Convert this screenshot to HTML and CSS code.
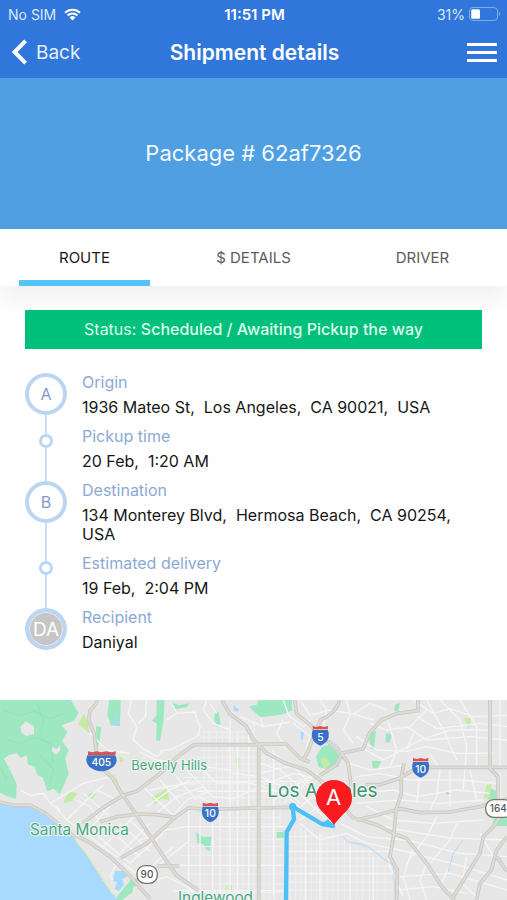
FILE: index.html
```html
<!DOCTYPE html>
<html lang="en">
  <head>
    <meta charset="UTF-8" />
    <meta name="viewport" content="width=device-width, initial-scale=1" />
    <title>Shipment details</title>
    <link rel="stylesheet" href="styles.css">
  </head>
  <body>
    <header class="header">
      <div class="statusbar">
        <span class="carrier">No SIM
          <svg class="wifi" viewBox="0 0 17 13" width="17" height="13" aria-hidden="true">
            <path d="M1 4.7a10.7 10.7 0 0 1 15 0M3.6 7.5a7 7 0 0 1 9.8 0" />
            <path class="wifi-dot" d="M5.6 9.5a4.2 4.2 0 0 1 5.8 0L8.5 12.6z" />
          </svg>
        </span>
        <span class="time">11:51 PM</span>
        <span class="battery">31%
          <svg viewBox="0 0 32 14" width="32" height="14" aria-hidden="true">
            <rect class="battery-case" x="0.5" y="0.5" width="28" height="13" rx="3.5" />
            <rect x="2.2" y="2.2" width="8.8" height="9.6" rx="1.5" fill="#fff" />
            <path d="M30 4.5q2 2.5 0 5z" fill="#8fb5ea" />
          </svg>
        </span>
      </div>
      <nav class="navbar">
        <a class="back" href="#">
          <svg viewBox="0 0 16 26" width="16" height="26" aria-hidden="true"><path d="M13.6 1.8 2.6 13l11 11.2" /></svg>
          Back
        </a>
        <h1 class="title">Shipment details</h1>
        <button class="menu" type="button" aria-label="Menu">
          <span></span><span></span><span></span>
        </button>
      </nav>
    </header>

    <section class="package">Package # 62af7326</section>

    <div class="tabs" role="tablist">
      <button class="tab active" type="button" role="tab" aria-selected="true">ROUTE</button>
      <button class="tab" type="button" role="tab" aria-selected="false">$ DETAILS</button>
      <button class="tab" type="button" role="tab" aria-selected="false">DRIVER</button>
    </div>

    <main class="route">
      <p class="status">Status: <strong>Scheduled / Awaiting Pickup the way</strong></p>

      <ol class="timeline">
        <li class="stop">
          <div class="track"><span class="marker">A</span></div>
          <div class="info">
            <h2>Origin</h2>
            <p>1936 Mateo St,  Los Angeles,  CA 90021,  USA</p>
          </div>
        </li>
        <li class="stop">
          <div class="track"><span class="dot"></span></div>
          <div class="info">
            <h2>Pickup time</h2>
            <p>20 Feb,  1:20 AM</p>
          </div>
        </li>
        <li class="stop">
          <div class="track"><span class="marker">B</span></div>
          <div class="info">
            <h2>Destination</h2>
            <p>134 Monterey Blvd,  Hermosa Beach,  CA 90254,  USA</p>
          </div>
        </li>
        <li class="stop">
          <div class="track"><span class="dot"></span></div>
          <div class="info">
            <h2>Estimated delivery</h2>
            <p>19 Feb,  2:04 PM</p>
          </div>
        </li>
        <li class="stop">
          <div class="track"><span class="marker avatar">DA</span></div>
          <div class="info">
            <h2>Recipient</h2>
            <p>Daniyal</p>
          </div>
        </li>
      </ol>
    </main>

    <svg class="map" viewBox="0 30 1521 600" role="img" aria-label="Route map">
      <defs>
        <g id="roads">
          <path d="M294 30Q284 50 270 62L266 90L282 130L288 180L304 234L336 262L366 312L404 366L446 432L492 502L530 556L596 602M248 400L310 352L370 316L410 304L474 256L530 202L582 164H776V630M776 162H858L900 204L930 216M300 396L350 380L420 372L470 374L526 382L566 354L630 358L760 354L872 352M362 504L440 460L524 384M228 436L270 458L330 500L384 552L450 626M470 528H538M0 336L40 346L92 346L134 368L180 406L228 444" />
          <path d="M666 30L690 72L738 108L760 148L800 190L862 222L920 240L960 270L1020 340L1060 384L1130 404L1180 430L1220 446L1280 520L1330 596L1364 630M884 30L890 72L930 104L960 136L1026 190L1090 176L1108 130L1144 90L1192 70L1254 62V30M1018 30Q1014 64 962 90L940 140L926 180L908 214M1026 190L1010 224L960 256M1026 190L1044 220L1054 290M1212 220L1204 260L1204 310L1188 360L1182 430L1170 500L1192 540L1190 630M1096 284L1140 284L1200 264L1240 240L1290 232H1521M1470 30V236L1494 260L1494 330M1070 390L1130 376L1200 356L1260 368L1350 366L1440 350L1521 326M1521 350L1480 410L1450 440L1440 490L1360 620M1521 440L1490 480L1474 540L1440 580L1430 630M1490 500L1521 544" />
        </g>
      </defs>
      <rect y="30" width="1521" height="600" fill="#e7e7e8" />

      <!-- parks -->
      <g fill="#9de8c0">
        <path d="M0 30H212L236 68L222 92L184 106L202 126L186 152L206 180L196 206L206 252L192 284L180 312L160 296L142 304L128 262L112 256L104 230L84 224L80 196L62 204L50 190L28 194L12 206L30 240L50 282L48 326L20 318L0 308Z" />
        <path d="M328 30H362L360 108L332 106L322 72ZM288 108L304 112L298 160L290 178ZM470 30H494L490 96L480 152L468 150L470 100L456 92L470 76ZM516 36L536 46L570 38L560 52L522 58ZM646 66L656 66L662 104L652 112L642 86Z" />
        <path d="M776 30H876V62L842 74L782 82L746 50L770 44ZM1095 136L1128 122L1122 178L1112 176L1108 148ZM1158 130L1176 132L1170 156L1156 158ZM1116 212L1144 214L1130 240L1118 232ZM1186 44L1200 38L1194 66L1182 60Z" />
        <path d="M966 170L986 164L1026 200L1014 230L984 238L956 232L948 200ZM588 426L606 440L634 440L630 484L618 478L612 464L592 460ZM830 422H852V444H830ZM352 618L394 568L412 564L416 584L400 592L398 606L366 630L348 630ZM1482 382H1521V408H1476ZM1464 290L1494 306L1492 330L1462 328ZM0 600L6 604V630H0Z" />
      </g>
      <g fill="#c5eba6">
        <path d="M252 70L234 102L268 130L264 100ZM192 328L210 304L232 310L216 334L192 340ZM256 322L272 308L290 310L274 328ZM456 322L500 296L508 330L484 326L464 344ZM708 202L718 202L718 234L708 228ZM680 584L698 584L698 606L676 606ZM1392 84H1414L1406 118L1400 102ZM1460 284L1474 282L1470 322L1450 326ZM356 196L374 210L360 218ZM344 250L356 280L348 278ZM960 208L976 200L990 222L972 238Z" />
      </g>
      <g fill="#e7e7e8">
        <path d="M62 110L76 94L102 108L102 132L80 138L64 128ZM158 170L170 178L180 164L180 182L168 194L154 184Z" />
      </g>
      <g class="ridges">
        <path d="M8 60L60 76L104 64L150 86L190 70M20 150L60 160L110 142L150 160L160 220M112 40L130 90L120 140M120 196L160 236L150 280M0 230L20 270" />
      </g>

      <!-- city streets -->
      <g class="streets fine">
        <path d="M612 126V330M628 120V334M650 124V350M668 130V350M684 110V630M698 130V630M714 120V630M730 120V630M748 100V630M762 90V630M792 190V630M808 206V630M824 216V630M840 220V400M610 126H760M600 142H770M600 182H790M590 202H820M590 222H840M560 242H800M550 262H780M540 282H860M530 302H860M520 322H870M610 382H840M660 402H840M660 424H850M650 448H850M540 470H850M540 496H850M530 526H850M560 552H850M560 582H850M560 608H850" />
        <path d="M872 434V630M886 420V630M902 410V630M918 430V630M934 430V630M950 430V630M966 430V630M982 430V630M998 430V630M1014 430V630M1034 450V630M1052 466V630M1070 470V630M1088 480V630M1108 490V630M1132 510V630M1156 530V630M866 440H1010M866 462H1030M866 484H1100M866 506H1140M866 528H1170M866 552H1180M866 576H1180M866 600H1180" />
      </g>
      <g class="streets">
        <path d="M566 358V630M600 380V600M638 400V630M660 350V630M690 90V630M712 130V630M746 130V630M820 180V620M916 420V630M960 430V630M1050 460V630M1120 500V630M540 526H850M420 450L500 420L560 410H860M590 304H880M450 300L590 274H900M864 484H1180M864 550H1180M520 602H860" />
        <path d="M396 30L384 70L410 110L400 150L430 176L470 200L500 176M440 30L436 80L416 100M500 90L530 70L584 66L600 110L596 136L520 176L480 184M420 186L470 210L580 226L690 240M516 40L530 70M620 30L610 60L640 100L690 120M270 130L320 180L390 190M60 300L90 316L130 310L150 340L180 360M150 340L250 280L330 260M166 350L200 390L250 340L310 284M200 390L256 430L330 348M230 330L270 350L296 390M250 310L330 380M290 300L350 330M256 430L310 470L400 380M310 470L350 500L450 400M296 440L390 520L490 430M330 420L420 500M360 400L450 484M390 390L470 470M370 520L420 560L520 470M420 560L470 530L570 450M350 520L330 560L360 590M440 580L500 560L580 600" />
        <path d="M440 350L510 300L570 270M470 370L530 320L610 290M520 376L560 330L640 300M430 290L470 330L520 376M480 270L540 340M520 250L590 330M560 240L640 320L700 326L780 290M600 230L650 280L740 276L860 310M592 320L660 350M700 250L780 260L850 290L900 340M780 220L840 240L900 290M820 190L880 230L940 290M780 250L860 230L930 240M800 280L880 250L940 262M820 330L880 290L950 250M850 340L940 260M880 370L960 300M900 390L980 330M840 300L940 390M870 280L980 390M900 266L1000 370" />
        <path d="M900 400L960 450L1040 430L1100 460L1200 480L1370 524L1521 570M1020 400L1100 440L1230 452L1380 490L1521 500M1060 390L1200 420L1350 444L1521 450M1100 350L1180 390L1300 400L1450 390M1180 440L1166 520L1210 620M1240 470L1210 560L1230 630M1290 500L1260 570L1280 630M1350 524L1320 590M1400 500L1386 580L1440 630M1440 430L1480 500L1521 530M1370 400L1350 450L1290 520M1310 380L1280 440L1220 520M1200 560L1350 550L1521 600M1190 600L1300 590L1400 610" />
        <path d="M900 30L930 76L990 60L1060 72L1110 40M960 30L980 60L970 106M1040 30L1050 76L1030 120L1060 160M1060 72L1120 90M1110 40L1160 60M1070 140L1130 180L1220 184L1280 170L1370 190L1480 190M1080 170L1150 210L1260 150L1350 120L1470 120M1050 220L1110 240L1210 226M1070 260L1140 250L1230 270L1380 270L1490 280M1080 310L1180 300L1250 320L1370 300L1470 310M1070 340L1200 330L1320 340L1450 330" />
        <path d="M1240 30L1300 70L1350 56L1420 80L1521 76M1280 30L1330 120L1370 210M1320 30L1380 90L1400 170L1390 300M1380 30L1430 110L1430 230M1500 30V230M1250 80L1310 116L1440 100L1521 110M1220 110L1280 150L1410 140L1521 150M1290 190L1320 240L1310 320L1290 360M1350 230V350M1260 250L1250 340M1410 240L1430 330M1110 100L1160 120L1230 110L1280 60M1160 80L1190 180L1170 230M1240 130L1220 180M1500 250V330M850 90L830 130L860 180M880 100L930 140L920 170M850 30L866 76L910 110L930 90M630 40L650 70M720 80L790 110L870 96M780 82L790 110" />
      </g>

      <!-- water -->
      <g fill="#a8daff">
        <path d="M0 340L40 346L92 352L134 374L180 410L228 450L260 490L290 534L318 580L338 608L352 630H0Z" />
        <path d="M344 544L382 542L380 562L366 566L372 584L356 604L344 598L350 578L340 572ZM702 42L708 54L718 56L712 66L700 62ZM344 74L354 90L360 108L342 106ZM902 124L912 128L908 152L902 146ZM1336 304L1352 310L1340 314Z" />
      </g>
      <path d="M228 452L262 494L290 538L318 582L338 610L352 602" fill="none" stroke="#f3ebad" stroke-width="4" />
      <path d="M1030 440L1042 456L1080 462L1110 474L1154 508L1180 526L1186 630M1388 450L1360 490L1344 546M988 150L1014 168L1030 210" fill="none" stroke="#b1dcfa" stroke-width="3" />

      <!-- freeways, casing first -->
      <use href="#roads" class="roads-edge" />
      <use href="#roads" class="roads-fill" />

      <!-- route line -->
      <path d="M1004 408L966 402L878 350L882 388L860 426L858 630" fill="none" stroke="#4fc0f7" stroke-width="13" stroke-linejoin="round" />
      <path d="M960 404L984 388L1008 412Z" fill="#4fc0f7" />
      <circle cx="878" cy="350" r="11" fill="#4fc0f7" />

      <!-- highway shields -->
      <g class="shield">
        <path d="M262 196H346Q356 216 340 230Q324 242 304 244Q284 242 268 230Q254 216 262 196Z" fill="#3871c6" />
        <path d="M264 184L276 187L290 184L304 187L318 184L334 187L348 184L346 195H264Z" fill="#db5351" />
        <text x="304" y="228">405</text>
      </g>
      <g class="shield">
        <path id="shield" d="M608 350H654Q664 384 631 397Q598 384 608 350Z" fill="#3871c6" />
        <path id="crown" d="M608 338L619 341L631 338L643 341L654 338V348H608Z" fill="#db5351" />
        <text x="631" y="382">10</text>
      </g>
      <g class="shield">
        <use href="#shield" x="330" y="-230" />
        <use href="#crown" x="330" y="-230" />
        <text x="961" y="152">5</text>
      </g>
      <g class="shield">
        <use href="#shield" x="631" y="-134" />
        <use href="#crown" x="631" y="-134" />
        <text x="1262" y="248">10</text>
      </g>
      <g class="badge">
        <rect x="411" y="527" width="61" height="53" rx="24" />
        <text x="441" y="564">90</text>
        <rect x="1457" y="329" width="80" height="53" rx="24" />
        <text x="1495" y="366">164</text>
      </g>

      <g class="places">
        <text x="394" y="240" font-size="39">Beverly Hills</text>
        <text x="90" y="434" font-size="46">Santa Monica</text>
        <text x="534" y="638" font-size="46">Inglewood</text>
        <text x="802" y="321" font-size="57" class="city">Los Angeles</text>
      </g>

      <!-- pickup pin -->
      <path d="M1002 404Q988 386 962 360A54 54 0 1 1 1042 360Q1016 386 1002 404Z" fill="#fb1b1f" />
      <text class="pin-label" x="1001" y="344">A</text>
    </svg>
  </body>
</html>
```

FILE: styles.css
```css
* {
  box-sizing: border-box;
}
body {
  margin: 0;
  background: #fff;
  color: #171717;
  font-family: Inter, "Liberation Sans", sans-serif;
  font-size: 16px;
}
h1,
h2,
p,
ol {
  margin: 0;
  padding: 0;
}
button {
  border: 0;
  padding: 0;
  background: none;
  font: inherit;
  cursor: pointer;
}

/* header */
.header {
  background: #3177db;
  color: #fff;
}
.statusbar,
.navbar {
  display: grid;
  grid-template-columns: 1fr auto 1fr;
  align-items: center;
}
.statusbar {
  height: 28px;
  padding: 0 6px 0 8px;
  font-size: 14px;
}
.carrier,
.battery {
  display: flex;
  align-items: center;
  gap: 8px;
  color: #dce8fa;
}
.battery {
  justify-content: flex-end;
  gap: 4px;
}
.time {
  font-size: 15px;
  font-weight: 600;
}
.wifi {
  fill: none;
  stroke: #fff;
  stroke-width: 2;
}
.wifi .wifi-dot {
  fill: #fff;
  stroke: none;
}
.battery-case {
  fill: none;
  stroke: #80abe8;
}
.navbar {
  height: 50px;
  padding: 0 10px 2px 12px;
}
.back {
  display: flex;
  align-items: center;
  gap: 8px;
  color: #e6effc;
  font-size: 19px;
  text-decoration: none;
}
.back svg {
  fill: none;
  stroke: #fff;
  stroke-width: 4;
}
.title {
  font-size: 21px;
  font-weight: 600;
}
.menu {
  display: flex;
  flex-direction: column;
  gap: 5px;
  width: 30px;
  justify-self: end;
}
.menu span {
  height: 3px;
  background: #fff;
}

.package {
  padding: 61px 20px;
  background: #509fe3;
  color: #f4f9fe;
  font-size: 22px;
  line-height: 29px;
  text-align: center;
}

/* tabs */
.tabs {
  display: grid;
  grid-template-columns: repeat(3, 1fr);
  background: #fff;
  box-shadow: 0 16px 20px rgba(0, 0, 0, 0.05);
}
.tab {
  height: 57px;
  margin: 0 19px;
  border-top: 6px solid transparent;
  border-bottom: 6px solid transparent;
  color: #5c5c5c;
  font-size: 15px;
}
.tab.active {
  border-bottom-color: #55c4fb;
  color: #171717;
}

/* route */
.route {
  padding: 24px 25px 38px;
}
.status {
  padding: 10px;
  background: #00c07b;
  color: #dcfbee;
  line-height: 19px;
  text-align: center;
}
.status strong {
  font-weight: 500;
}
.timeline {
  margin-top: 24px;
  list-style: none;
}
.stop {
  display: flex;
  gap: 15px;
}
.track {
  display: flex;
  flex-direction: column;
  align-items: center;
  width: 42px;
}
.track::after {
  content: "";
  flex: 1;
  width: 2px;
  background: #cbdff4;
}
.stop:last-child .track::after {
  display: none;
}
.marker {
  display: flex;
  align-items: center;
  justify-content: center;
  width: 42px;
  height: 42px;
  border: 4px solid #bad6f3;
  border-radius: 50%;
  color: #7f9cc8;
}
.avatar {
  background: #c6c6c6;
  box-shadow: inset 0 0 0 1px #dfe9f4;
  color: #fff;
  font-size: 19px;
}
.dot {
  width: 14px;
  height: 14px;
  border: 3px solid #bad6f3;
  border-radius: 50%;
}
.track:has(.dot)::before {
  content: "";
  width: 2px;
  height: 7px;
  background: #cbdff4;
}
.info {
  flex: 1;
  padding-bottom: 10px;
}
.info h2 {
  margin-bottom: 6px;
  color: #8ba9d4;
  font-size: 16px;
  font-weight: 400;
  line-height: 19px;
}
.info p {
  line-height: 19px;
  white-space: pre-wrap;
}

/* map */
.map {
  display: block;
  width: 100%;
}
.ridges {
  fill: none;
  stroke: #8edfb4;
  stroke-width: 4;
  opacity: 0.5;
}
.streets {
  fill: none;
  stroke: #f5f5f6;
  stroke-width: 4;
}
.streets.fine {
  stroke: #f0f0f1;
  stroke-width: 3;
}
.roads-edge {
  fill: none;
  stroke: #c9c8c4;
  stroke-width: 11;
  stroke-linejoin: round;
}
.roads-fill {
  fill: none;
  stroke: #dddbd3;
  stroke-width: 6;
  stroke-linejoin: round;
}
.shield text {
  fill: #fff;
  font-size: 31px;
  font-weight: 500;
  text-anchor: middle;
}
.badge rect {
  fill: #fff;
  stroke: #777;
  stroke-width: 4;
}
.badge text {
  fill: #555;
  font-size: 30px;
  font-weight: 500;
  text-anchor: middle;
}
.places text {
  fill: #4aa980;
  stroke: #f1f5f3;
  stroke-width: 6;
  paint-order: stroke;
}
.places .city {
  fill: #3f9672;
}
.pin-label {
  fill: #fff;
  font-size: 66px;
  text-anchor: middle;
}
```
